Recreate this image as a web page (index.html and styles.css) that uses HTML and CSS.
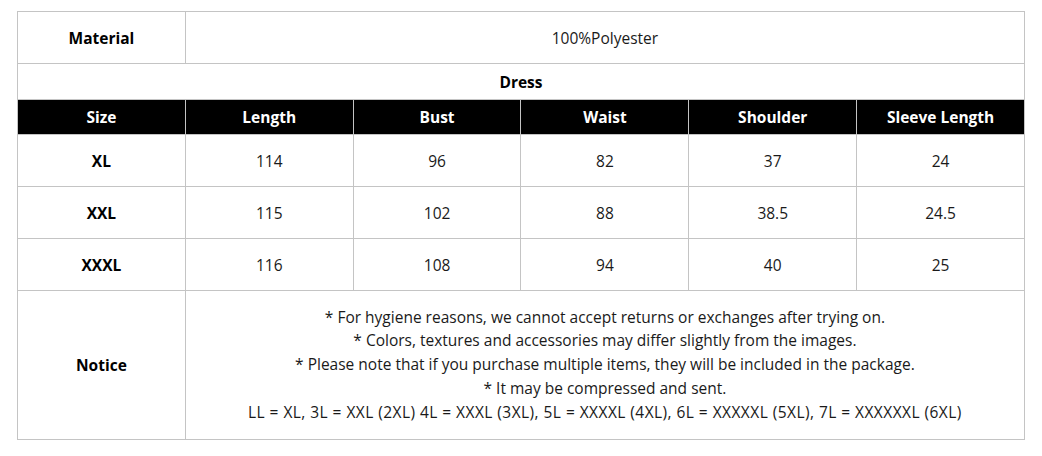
FILE: index.html
```html
<!DOCTYPE html>
<html>
<head>
<meta charset="utf-8">
<link rel="stylesheet" href="styles.css">
</head>
<body>
<table class="size-table">
  <colgroup>
    <col class="c"><col class="c"><col class="c"><col class="c"><col class="c"><col class="c">
  </colgroup>
  <tr class="row-material">
    <th class="label">Material</th>
    <td colspan="5">100%Polyester</td>
  </tr>
  <tr class="row-title">
    <th colspan="6" class="title">Dress</th>
  </tr>
  <tr class="row-head">
    <th>Size</th><th>Length</th><th>Bust</th><th>Waist</th><th>Shoulder</th><th>Sleeve Length</th>
  </tr>
  <tr class="row-data">
    <th class="label">XL</th><td>114</td><td>96</td><td>82</td><td>37</td><td>24</td>
  </tr>
  <tr class="row-data">
    <th class="label">XXL</th><td>115</td><td>102</td><td>88</td><td>38.5</td><td>24.5</td>
  </tr>
  <tr class="row-data">
    <th class="label">XXXL</th><td>116</td><td>108</td><td>94</td><td>40</td><td>25</td>
  </tr>
  <tr class="row-notice">
    <th class="label">Notice</th>
    <td colspan="5" class="notice">
      * For hygiene reasons, we cannot accept returns or exchanges after trying on.<br>
      * Colors, textures and accessories may differ slightly from the images.<br>
      * Please note that if you purchase multiple items, they will be included in the package.<br>
      * It may be compressed and sent.<br>
      <span class="sizes">LL = XL, 3L = XXL (2XL) 4L = XXXL (3XL), 5L = XXXXL (4XL), 6L = XXXXXL (5XL), 7L = XXXXXXL (6XL)</span>
    </td>
  </tr>
</table>
</body>
</html>
```

FILE: styles.css
```css
html, body {
  margin: 0;
  padding: 0;
  background: #ffffff;
}
body {
  padding: 11px 17px;
  font-family: "Open Sans", "Noto Sans", "DejaVu Sans", sans-serif;
  font-size: 15.5px;
  color: #1a1a1a;
}
.size-table {
  width: 1008px;
  table-layout: fixed;
  border-collapse: collapse;
}
.size-table th,
.size-table td {
  border: 1px solid #c4c4c4;
  text-align: center;
  vertical-align: middle;
  padding: 0;
}
.size-table th {
  font-weight: 700;
  color: #000;
}
.row-material { height: 52px; }
.row-title { height: 36px; }
.row-head { height: 35px; }
.row-head th {
  background: #000;
  color: #fff;
}
.row-data { height: 52px; }
.row-notice { height: 149px; }
.notice {
  line-height: 23.7px;
  padding-top: 4px;
}
.sizes {
  letter-spacing: 0.45px;
}
```
